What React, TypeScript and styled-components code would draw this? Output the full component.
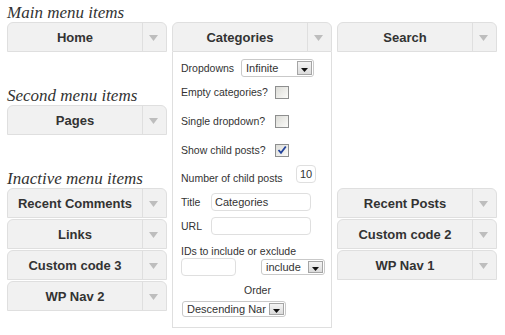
import React from "react";
import styled, { createGlobalStyle } from "styled-components";

const Global = createGlobalStyle`
  html, body { margin: 0; padding: 0; background: #fff; }
  body { font-family: "Liberation Sans", Arial, sans-serif; color: #333; }
`;

const Page = styled.div`
  box-sizing: border-box;
  padding: 4px 7px 0;
  width: 505px;
  min-height: 335px;
`;

const Section = styled.section<{ $first?: boolean }>`
  margin-top: ${(p) => (p.$first ? 0 : 35)}px;
`;

const Heading = styled.h3`
  margin: 0;
  font-family: "Liberation Serif", Georgia, serif;
  font-style: italic;
  font-weight: normal;
  font-size: 17px;
  line-height: 18px;
  color: #333;
`;

const Columns = styled.div`
  display: grid;
  grid-template-columns: repeat(3, 160px);
  column-gap: 5px;
  align-items: start;
`;

const Column = styled.div`
  display: flex;
  flex-direction: column;
  gap: 1px;
  position: relative;
`;

const WidgetBar = styled.div`
  box-sizing: border-box;
  height: 30px;
  display: flex;
  border: 1px solid #dfdfdf;
  border-radius: 6px 6px 0 0;
  background: #f1f1f1;
`;

const WidgetTitle = styled.div`
  flex: 1;
  display: flex;
  align-items: center;
  justify-content: center;
  font-family: "Liberation Sans", Arial, sans-serif;
  font-weight: bold;
  font-size: 13px;
  color: #333;
  white-space: nowrap;
`;

const ArrowBox = styled.div`
  width: 21px;
  border-left: 1px solid #dfdfdf;
  display: flex;
  align-items: center;
  justify-content: center;
  padding-top: 2px;
  padding-right: 2px;
`;

const WidgetWrap = styled.div`
  position: relative;
`;

const Panel = styled.div`
  position: absolute;
  top: 100%;
  left: 0;
  box-sizing: border-box;
  width: 160px;
  background: #fff;
  border: 1px solid #dfdfdf;
  border-top: none;
  padding: 7px 0 10px 8px;
  display: flex;
  flex-direction: column;
  z-index: 2;
`;

const Row = styled.div<{ $h: number; $mt?: number; $align?: string }>`
  display: flex;
  height: ${(p) => p.$h}px;
  margin-top: ${(p) => p.$mt ?? 0}px;
  align-items: ${(p) => p.$align ?? "center"};
`;

const Label = styled.span<{ $w?: number; $center?: boolean }>`
  font-size: 10.5px;
  line-height: 11px;
  color: #333;
  white-space: nowrap;
  ${(p) => (p.$w ? `width: ${p.$w}px; flex: none;` : "")}
  ${(p) => (p.$center ? "flex: 1; text-align: center; padding-left: 3px;" : "")}
`;

const TextInput = styled.div<{ $w: number; $ml?: number; $center?: boolean; $top?: boolean }>`
  box-sizing: border-box;
  width: ${(p) => p.$w}px;
  height: 18px;
  margin-left: ${(p) => p.$ml ?? 0}px;
  border: 1px solid #dfdfdf;
  border-radius: 4px;
  background: #fff;
  font-size: 11px;
  line-height: 16px;
  padding: 0 3px;
  color: #333;
  white-space: nowrap;
  overflow: hidden;
  text-align: ${(p) => (p.$center ? "center" : "left")};
  ${(p) => (p.$top ? "align-self: flex-start;" : "")}
`;

const SelectBox = styled.div<{ $w: number; $h?: number; $ml?: number }>`
  box-sizing: border-box;
  width: ${(p) => p.$w}px;
  height: ${(p) => p.$h ?? 18}px;
  margin-left: ${(p) => p.$ml ?? 0}px;
  border: 1px solid #c9c9c9;
  border-radius: 3px;
  background: #fff;
  display: flex;
  align-items: center;
  padding: 1px;
`;

const SelectText = styled.span`
  flex: 1;
  font-size: 11px;
  color: #333;
  padding-left: 3px;
  white-space: nowrap;
`;

const SelectButton = styled.span`
  box-sizing: border-box;
  flex: none;
  width: 15px;
  height: 100%;
  border: 1px solid #a5a5a5;
  background: linear-gradient(#f4f4f4, #dcdcdc);
  display: flex;
  align-items: center;
  justify-content: center;
  padding-top: 3px;
`;

const CheckBox = styled.span`
  box-sizing: border-box;
  width: 14px;
  height: 13px;
  border: 1px solid #8e8f8f;
  background: linear-gradient(135deg, #dcdcd7, #fbfbf9);
  display: flex;
  align-items: center;
  justify-content: center;
`;

const Arrow = () => (
  <svg width="9" height="6" viewBox="0 0 9 6">
    <polygon points="0,0 9,0 4.5,6" fill="#bdbdbd" />
  </svg>
);

const Widget = ({ title, children }: { title: string; children?: React.ReactNode }) => (
  <WidgetWrap>
    <WidgetBar>
      <WidgetTitle>{title}</WidgetTitle>
      <ArrowBox>
        <Arrow />
      </ArrowBox>
    </WidgetBar>
    {children}
  </WidgetWrap>
);

const Select = ({ value, w, h, ml }: { value: string; w: number; h?: number; ml?: number }) => (
  <SelectBox $w={w} $h={h} $ml={ml}>
    <SelectText>{value}</SelectText>
    <SelectButton>
      <svg width="7" height="4" viewBox="0 0 7 4">
        <polygon points="0,0 7,0 3.5,4" fill="#111" />
      </svg>
    </SelectButton>
  </SelectBox>
);

const Check = ({ checked }: { checked?: boolean }) => (
  <CheckBox>
    {checked && (
      <svg width="10" height="10" viewBox="0 0 10 10">
        <path d="M1.5 5 L4 7.8 L8.8 1.5" stroke="#23439c" strokeWidth="1.8" fill="none" />
      </svg>
    )}
  </CheckBox>
);

const CategoriesPanel = () => (
  <Panel>
    <Row $h={18}>
      <Label $w={60}>Dropdowns</Label>
      <Select value="Infinite" w={73} />
    </Row>
    <Row $h={14} $mt={8}>
      <Label $w={94}>Empty categories?</Label>
      <Check />
    </Row>
    <Row $h={14} $mt={15}>
      <Label $w={94}>Single dropdown?</Label>
      <Check />
    </Row>
    <Row $h={14} $mt={15}>
      <Label $w={94}>Show child posts?</Label>
      <Check checked />
    </Row>
    <Row $h={19} $mt={8} $align="flex-end">
      <Label $w={115}>Number of child posts</Label>
      <TextInput $w={20} $center $top>
        10
      </TextInput>
    </Row>
    <Row $h={18} $mt={9}>
      <Label $w={30}>Title</Label>
      <TextInput $w={100}>Categories</TextInput>
    </Row>
    <Row $h={18} $mt={6}>
      <Label $w={30}>URL</Label>
      <TextInput $w={100} />
    </Row>
    <Row $h={12} $mt={10}>
      <Label>IDs to include or exclude</Label>
    </Row>
    <Row $h={18} $mt={1}>
      <TextInput $w={55} />
      <Select value="include" w={64} h={16} ml={25} />
    </Row>
    <Row $h={12} $mt={8}>
      <Label $center>Order</Label>
    </Row>
    <Row $h={16} $mt={5}>
      <Select value="Descending Nar" w={104} h={16} ml={1} />
    </Row>
  </Panel>
);

export default function App() {
  return (
    <>
      <Global />
      <Page>
        <Section $first>
          <Heading>Main menu items</Heading>
          <Columns>
            <Column>
              <Widget title="Home" />
            </Column>
            <Column>
              <Widget title="Categories">
                <CategoriesPanel />
              </Widget>
            </Column>
            <Column>
              <Widget title="Search" />
            </Column>
          </Columns>
        </Section>
        <Section>
          <Heading>Second menu items</Heading>
          <Columns>
            <Column>
              <Widget title="Pages" />
            </Column>
          </Columns>
        </Section>
        <Section>
          <Heading>Inactive menu items</Heading>
          <Columns>
            <Column>
              <Widget title="Recent Comments" />
              <Widget title="Links" />
              <Widget title="Custom code 3" />
              <Widget title="WP Nav 2" />
            </Column>
            <Column />
            <Column>
              <Widget title="Recent Posts" />
              <Widget title="Custom code 2" />
              <Widget title="WP Nav 1" />
            </Column>
          </Columns>
        </Section>
      </Page>
    </>
  );
}
